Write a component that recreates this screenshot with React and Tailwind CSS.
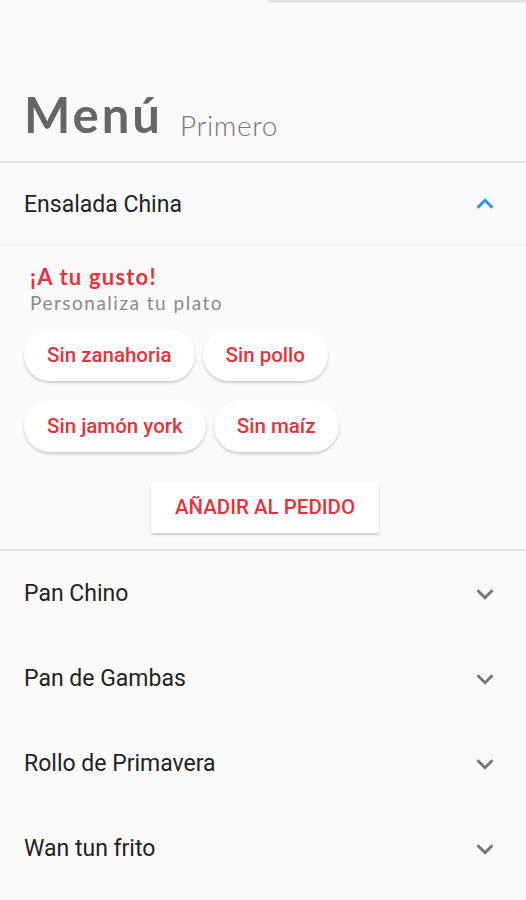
import React from "react";

const Chevron = ({ up = false, color }) => (
  <svg width="34" height="34" viewBox="0 0 24 24" style={{ transform: up ? "rotate(180deg)" : undefined }}>
    <path d="M16.59 8.59L12 13.17 7.41 8.59 6 10l6 6 6-6z" fill={color} />
  </svg>
);

const Row = ({ title }) => (
  <div className="flex h-[85px] items-center justify-between pl-6 pr-[24px]">
    <span className="text-[23px] leading-none text-[#222222]" style={{ fontFamily: "Roboto, sans-serif" }}>{title}</span>
    <Chevron color="#757575" />
  </div>
);

const Chip = ({ label }) => (
  <div className="flex h-[52px] items-center rounded-full bg-white px-[23px] text-[20.5px] text-[#e8323b] shadow-[0_2px_3px_rgba(0,0,0,0.18)]" style={{ fontFamily: "Roboto, sans-serif", fontWeight: 500 }}>
    {label}
  </div>
);

export default function App() {
  return (
    <div className="min-h-[900px] w-[526px] bg-[#fafafa]">
      <div className="ml-[268px] h-[2px] bg-[#e2e2e2] shadow-[0_1px_2px_rgba(0,0,0,0.08)]" />
      <div className="flex h-[159px] items-end pb-[22px] pl-6">
        <span className="text-[49px] font-bold leading-none tracking-[3px] text-[#666666]" style={{ fontFamily: "Lato, sans-serif" }}>Menú</span>
        <span className="ml-[17px] text-[28px] font-light leading-none tracking-[0.6px] text-[#777777]" style={{ fontFamily: "Lato, sans-serif" }}>Primero</span>
      </div>
      <div className="h-[2px] bg-[#e6e6e6]" />
      <div className="flex h-[82px] items-center justify-between pl-6 pr-[24px]">
        <span className="text-[23px] leading-none text-[#222222]" style={{ fontFamily: "Roboto, sans-serif" }}>Ensalada China</span>
        <Chevron up color="#2196f3" />
      </div>
      <div className="h-px bg-[#efefef]" />
      <div className="flex h-[303px] flex-col px-6 pt-[17px]">
        <div className="pl-[6px] text-[22px] font-bold leading-[28px] tracking-[1.2px] text-[#e8323b]" style={{ fontFamily: "Lato, sans-serif" }}>¡A tu gusto!</div>
        <div className="pl-[6px] text-[19px] leading-[24px] tracking-[1.5px] text-[#8a8a8a]" style={{ fontFamily: "Lato, sans-serif" }}>Personaliza tu plato</div>
        <div className="mt-[14px] flex flex-wrap gap-x-2 gap-y-[19px]">
          <Chip label="Sin zanahoria" />
          <Chip label="Sin pollo" />
          <Chip label="Sin jamón york" />
          <Chip label="Sin maíz" />
        </div>
        <div className="mt-[30px] flex justify-center">
          <div className="ml-[4px] flex h-[51px] w-[228px] items-center justify-center rounded-[2px] bg-white text-[20.5px] text-[#e8323b] shadow-[0_2px_3px_rgba(0,0,0,0.2)]" style={{ fontFamily: "Roboto, sans-serif", fontWeight: 500 }}>
            AÑADIR AL PEDIDO
          </div>
        </div>
      </div>
      <div className="h-[2px] bg-[#e6e6e6]" />
      <Row title="Pan Chino" />
      <Row title="Pan de Gambas" />
      <Row title="Rollo de Primavera" />
      <Row title="Wan tun frito" />
    </div>
  );
}
